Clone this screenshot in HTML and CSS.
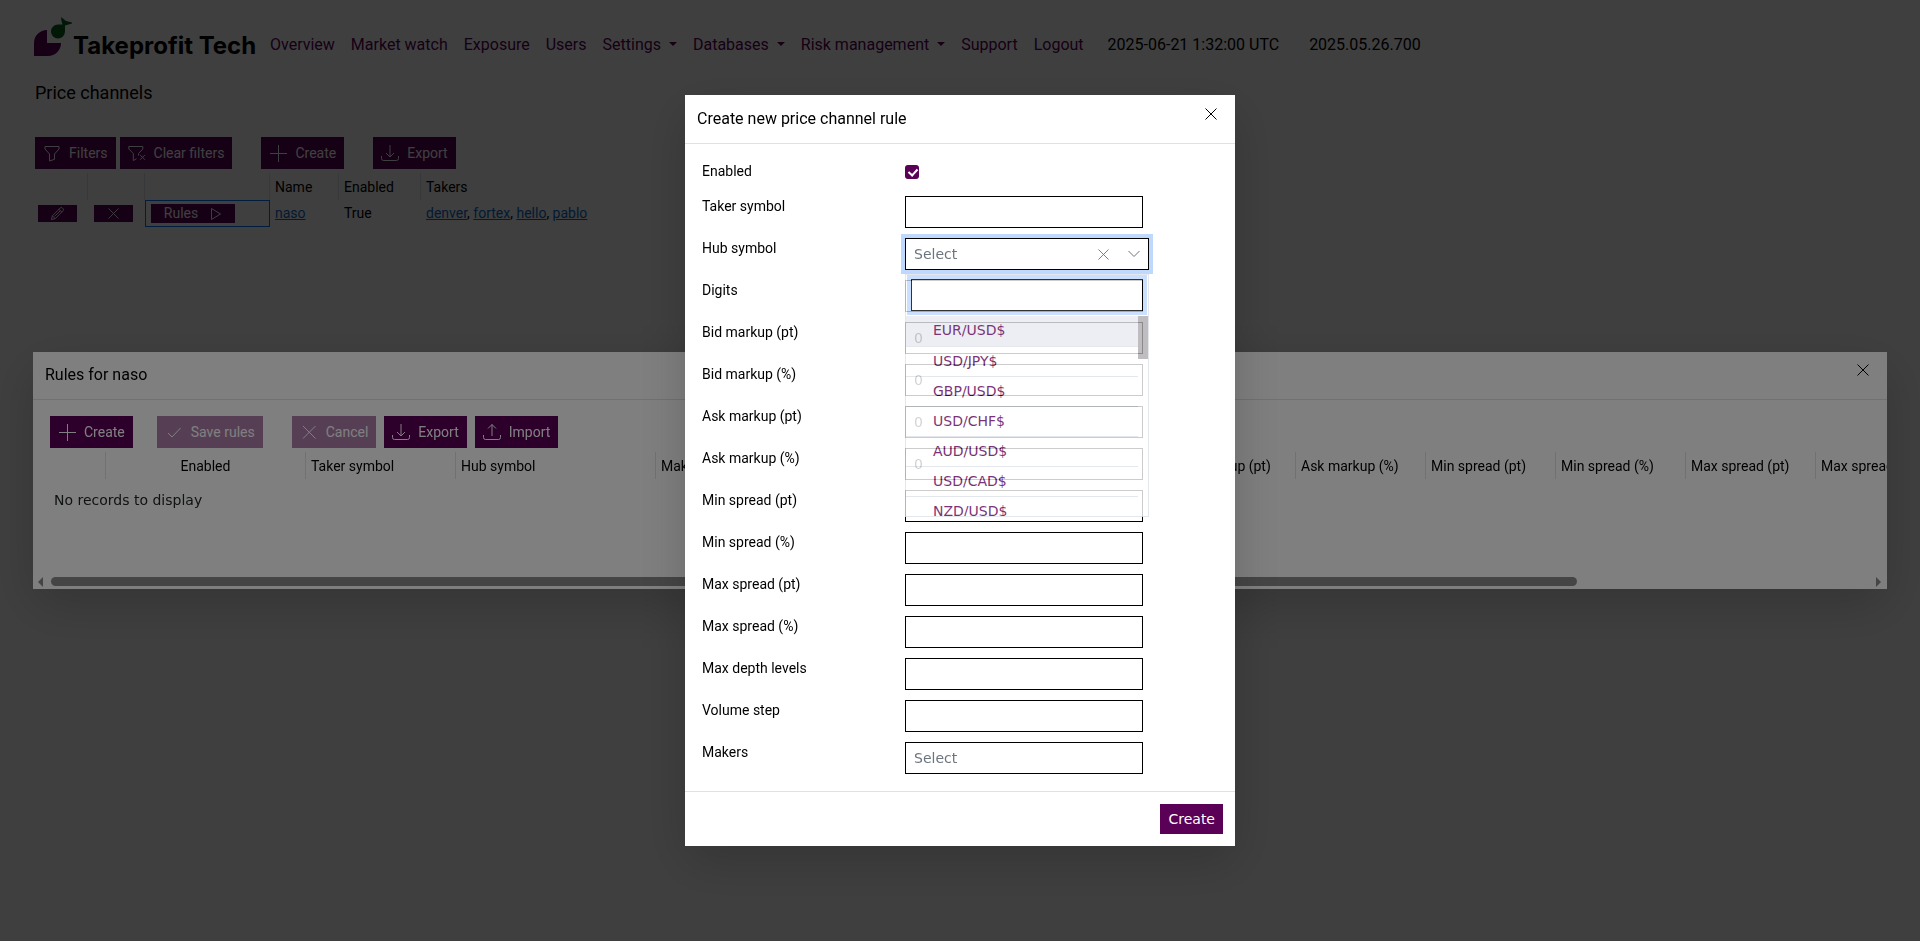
FILE: index.html
```html
<!DOCTYPE html>
<html lang="en">
<head>
<meta charset="utf-8">
<meta name="viewport" content="width=device-width, initial-scale=1">
<title>Price channels</title>
<link rel="stylesheet" href="styles.css">
</head>
<body>
<svg class="sprite" aria-hidden="true">
  <symbol id="i-filter" viewBox="0 0 18 18"><path d="M2 2.500h14v2.500l-4.500 5v5.300l-5 1.700v-7L2 5z" stroke-linejoin="round"/></symbol>
  <symbol id="i-filter-x" viewBox="0 0 18 18"><path d="M8.500 14.800l-3.200 1.700v-7L.8 5V2.500h14v2.500l-4.300 4.500v2M12 10.800l5 5M17 10.800l-5 5" stroke-linejoin="round"/></symbol>
  <symbol id="i-plus" viewBox="0 0 18 18"><path d="M9.500 1v17M1 9.500h17"/></symbol>
  <symbol id="i-down" viewBox="0 0 18 18"><path d="M.5 12v2.500q0 2 2 2h13q2 0 2-2V12M9 1v12M5 9l4 4 4-4"/></symbol>
  <symbol id="i-up" viewBox="0 0 18 18"><path d="M.5 12v2.500q0 2 2 2h13q2 0 2-2V12M9 13V1.500M5 5.500l4-4 4 4"/></symbol>
  <symbol id="i-check" viewBox="0 0 18 18"><path d="M3 10l4 4 8.500-9"/></symbol>
  <symbol id="i-x" viewBox="0 0 18 18"><path d="M3 3l12.500 12.500M15.500 3L3 15.500"/></symbol>
  <symbol id="i-close" viewBox="0 0 12 12"><path d="M.5.5l11 11M11.500.5l-11 11"/></symbol>
  <symbol id="i-pencil" viewBox="0 0 16 16"><path d="M1.500 14.500l1-4L11 2q1-1 2 0l1 1q1 1 0 2l-8.500 8.500zM9.500 3.500l3 3M2.500 10.500l3 3M5 11l6-6" stroke-linejoin="round"/></symbol>
  <symbol id="i-play" viewBox="0 0 12 14"><path d="M1.500 1.500v11l9-5.500z" stroke-linejoin="round"/></symbol>
  <symbol id="i-chevron" viewBox="0 0 12 8"><path d="M.5 1l5.500 5.500L11.500 1"/></symbol>
</svg>

<div class="page">
  <header class="topbar">
    <a class="brand" href="#">
      <svg class="brand-mark" viewBox="0 0 38 40" aria-hidden="true">
        <path class="leaf" d="M0 39V26A13 13 0 0 1 13 13v13h14A13 13 0 0 1 14 39z"/>
        <path class="fruit" d="M17 14.500A7 7 0 0 1 24 7.500h4.500L27.500 4 27 0l5 4 6 1.500v1L31 8.500V14.500a7 7 0 0 1-14 0z"/>
      </svg>
      <span class="brand-name">Takeprofit Tech</span>
    </a>
    <nav class="nav">
      <a href="#">Overview</a>
      <a href="#">Market watch</a>
      <a href="#">Exposure</a>
      <a href="#">Users</a>
      <a class="drop" href="#">Settings</a>
      <a class="drop" href="#">Databases</a>
      <a class="drop" href="#">Risk management</a>
      <a href="#">Support</a>
      <a href="#">Logout</a>
    </nav>
    <span class="clock">2025-06-21 1:32:00 UTC</span>
    <span>2025.05.26.700</span>
  </header>
  <main class="content">
    <h1 class="title">Price channels</h1>
    <div class="toolbar">
      <button class="btn" type="button"><svg><use href="#i-filter"/></svg>Filters</button>
      <button class="btn gap-s" type="button"><svg><use href="#i-filter-x"/></svg>Clear filters</button>
      <button class="btn gap-l" type="button"><svg><use href="#i-plus"/></svg>Create</button>
      <button class="btn gap-l" type="button"><svg><use href="#i-down"/></svg>Export</button>
    </div>
    <table class="grid channels">
      <colgroup><col class="c-edit"><col class="c-del"><col class="c-rules"><col class="c-name"><col class="c-on"><col class="c-takers"></colgroup>
      <thead><tr><th></th><th></th><th></th><th>Name</th><th>Enabled</th><th>Takers</th></tr></thead>
      <tbody><tr>
        <td class="act"><button class="mini" type="button" aria-label="Edit"><svg class="pencil"><use href="#i-pencil"/></svg></button></td>
        <td class="act"><button class="mini" type="button" aria-label="Delete"><svg class="cross"><use href="#i-close"/></svg></button></td>
        <td class="act focused"><button class="mini rules" type="button">Rules<svg class="play"><use href="#i-play"/></svg></button></td>
        <td><a href="#">naso</a></td>
        <td>True</td>
        <td><a href="#">denver</a>, <a href="#">fortex</a>, <a href="#">hello</a>, <a href="#">pablo</a></td>
      </tr></tbody>
    </table>
  </main>
</div>

<div class="overlay">
  <section class="dialog rules-dialog" role="dialog" aria-label="Rules for naso">
    <header class="dialog-head"><h2>Rules for naso</h2><button class="close" type="button" aria-label="Close"><svg><use href="#i-close"/></svg></button></header>
    <div class="rules-body">
      <div class="toolbar">
        <button class="btn" type="button"><svg><use href="#i-plus"/></svg>Create</button>
        <button class="btn gap-m" type="button" disabled><svg><use href="#i-check"/></svg>Save rules</button>
        <button class="btn gap-l" type="button" disabled><svg><use href="#i-x"/></svg>Cancel</button>
        <button class="btn gap-n" type="button"><svg><use href="#i-down"/></svg>Export</button>
        <button class="btn gap-n" type="button"><svg><use href="#i-up"/></svg>Import</button>
      </div>
      <table class="grid rules-grid">
        <colgroup><col class="r-icon"><col class="r-wide"><col class="r-taker"><col class="r-wide"><col class="r-makers"><col class="r-num" span="9"></colgroup>
        <thead><tr><th></th><th class="mid">Enabled</th><th>Taker symbol</th><th>Hub symbol</th><th>Makers</th><th>Digits</th><th>Bid markup (pt)</th><th>Bid markup (%)</th><th>Ask markup (pt)</th><th>Ask markup (%)</th><th>Min spread (pt)</th><th>Min spread (%)</th><th>Max spread (pt)</th><th>Max spread (%)</th></tr></thead>
        <tbody><tr><td class="empty" colspan="14">No records to display</td></tr></tbody>
      </table>
    </div>
    <div class="scroll" aria-hidden="true"><span class="arrow-l"></span><span class="track"><span class="thumb"></span></span><span class="arrow-r"></span></div>
  </section>
</div>

<div class="overlay">
  <form class="dialog create-dialog" role="dialog" aria-label="Create new price channel rule">
    <header class="dialog-head"><h2>Create new price channel rule</h2><button class="close" type="button" aria-label="Close"><svg><use href="#i-close"/></svg></button></header>
    <div class="fields">
      <div class="field check"><label for="f-enabled">Enabled</label><input id="f-enabled" type="checkbox" checked></div>
      <div class="field"><label for="f-taker">Taker symbol</label><input class="box" id="f-taker" type="text"></div>
      <div class="field"><label for="f-hub">Hub symbol</label>
        <div class="combo">
          <button class="combo-box" id="f-hub" type="button" aria-haspopup="listbox" aria-expanded="true"><span>Select</span><svg class="clear"><use href="#i-close"/></svg><svg class="chev"><use href="#i-chevron"/></svg></button>
          <div class="popup">
            <div class="search"><input class="box" type="text" aria-label="Search symbols"></div>
            <div class="list">
              <ul role="listbox" aria-label="Hub symbol">
                <li class="active" role="option">EUR/USD$</li><li role="option">USD/JPY$</li><li role="option">GBP/USD$</li><li role="option">USD/CHF$</li><li role="option">AUD/USD$</li><li role="option">USD/CAD$</li><li role="option">NZD/USD$</li>
              </ul>
              <span class="list-thumb"></span>
            </div>
          </div>
        </div>
      </div>
      <div class="field"><label for="f-digits">Digits</label><input class="box" id="f-digits" type="text"></div>
      <div class="field"><label for="f-bp">Bid markup (pt)</label><input class="box" id="f-bp" type="text" placeholder="0"></div>
      <div class="field"><label for="f-bc">Bid markup (%)</label><input class="box" id="f-bc" type="text" placeholder="0"></div>
      <div class="field"><label for="f-ap">Ask markup (pt)</label><input class="box" id="f-ap" type="text" placeholder="0"></div>
      <div class="field"><label for="f-ac">Ask markup (%)</label><input class="box" id="f-ac" type="text" placeholder="0"></div>
      <div class="field"><label for="f-np">Min spread (pt)</label><input class="box" id="f-np" type="text"></div>
      <div class="field"><label for="f-nc">Min spread (%)</label><input class="box" id="f-nc" type="text"></div>
      <div class="field"><label for="f-xp">Max spread (pt)</label><input class="box" id="f-xp" type="text"></div>
      <div class="field"><label for="f-xc">Max spread (%)</label><input class="box" id="f-xc" type="text"></div>
      <div class="field"><label for="f-depth">Max depth levels</label><input class="box" id="f-depth" type="text"></div>
      <div class="field"><label for="f-step">Volume step</label><input class="box" id="f-step" type="text"></div>
      <div class="field"><label for="f-makers">Makers</label><select class="box" id="f-makers"><option>Select</option></select></div>
    </div>
    <footer class="dialog-foot"><button class="submit" type="submit">Create</button></footer>
  </form>
</div>
</body>
</html>
```

FILE: styles.css
```css
:root {
  --purple: #5a0056;
  --line: #dee2e6;
  --ui: Roboto, sans-serif;
  --system: "DejaVu Sans", sans-serif;
}

* { box-sizing: border-box; }

body {
  margin: 0;
  background: #fff;
  color: #000;
  font: 14px/21px var(--ui);
}

h1, h2, ul { margin: 0; padding: 0; font-weight: 400; }
button, input, select { font: inherit; margin: 0; border-radius: 0; }
svg { fill: none; stroke: currentColor; flex: none; }
.sprite { display: none; }

/* top navigation */
.page { padding: 17px 32px; }
.topbar {
  display: flex;
  align-items: center;
  height: 56px;
  font-size: 16px;
  line-height: 24px;
  white-space: nowrap;
}
.brand {
  display: flex;
  align-items: flex-end;
  gap: 1px;
  width: 230px;
  padding-left: 2px;
  color: #000;
  text-decoration: none;
}
.brand-mark { width: 38px; height: 40px; margin-bottom: 17px; stroke: none; }
.leaf { fill: #5c0059; }
.fruit { fill: #05601b; }
.brand-name { font: 700 24px/32px Inter, sans-serif; margin-bottom: 12px; }
.nav { display: flex; }
.nav a { padding: 0 8px; color: var(--purple); text-decoration: none; }
.nav .drop::after {
  content: "";
  display: inline-block;
  margin-left: 8px;
  vertical-align: 4px;
  border: 4px solid transparent;
  border-top-color: currentColor;
  border-bottom: 0;
}
.clock { margin: 0 30px 0 16px; }

/* page content */
.content { padding: 6px 3px; }
.title { font-size: 18px; line-height: 27px; margin-bottom: 31px; }
.toolbar { display: flex; }
.btn {
  display: flex;
  align-items: center;
  gap: 8px;
  height: 32px;
  padding: 0 8px;
  border: 0;
  background: var(--purple);
  color: #fff;
}
.btn svg { width: 18px; height: 18px; }
.btn:disabled { opacity: .5; }
.gap-s { margin-left: 4px; }
.gap-n { margin-left: 8px; }
.gap-m { margin-left: 24px; }
.gap-l { margin-left: 29px; }

.grid { border-collapse: separate; border-spacing: 0; table-layout: fixed; margin-top: 4px; }
.grid th {
  height: 27px;
  padding: 1px 5px 0;
  border-right: 1px solid var(--line);
  font-weight: 400;
  text-align: left;
  white-space: nowrap;
}
.grid th:last-child { border-right: 0; }
.grid td { height: 27px; padding: 0 5px; }
.grid a { color: #0a6ac9; }
.channels { width: 700px; }
.c-edit { width: 53px; }
.c-del { width: 57px; }
.c-rules { width: 125px; }
.c-name { width: 69px; }
.c-on { width: 82px; }
.grid .act { padding: 0 3px 0 6px; }
.grid .act:first-child { padding-left: 3px; }
.mini {
  display: flex;
  align-items: center;
  justify-content: center;
  width: 39px;
  height: 17px;
  padding: 0;
  border: 0;
  background: var(--purple);
  color: #fff;
}
.mini.rules { width: 84px; height: 19px; gap: 12px; }
.focused { outline: 1px solid #0070ff; outline-offset: -1px; }
.pencil { width: 15px; height: 15px; }
.cross { width: 11px; height: 11px; }
.play { width: 12px; height: 14px; }

/* dialogs */
.overlay {
  position: fixed;
  inset: 0;
  display: grid;
  place-items: center;
  background: rgba(0, 0, 0, .5);
}
.dialog { background: #fff; box-shadow: 0 16px 48px rgba(0, 0, 0, .18); }
.dialog-head {
  display: flex;
  justify-content: space-between;
  padding: 12px 18px 12px 12px;
  border-bottom: 1px solid var(--line);
}
.dialog-head h2 { font-size: 16px; line-height: 24px; }
.close { width: 12px; height: 12px; margin-top: 1px; padding: 0; border: 0; background: none; color: #000; }
.close svg { display: block; width: 12px; height: 12px; }

.rules-dialog { width: calc(100% - 66px); }
.rules-dialog .dialog-head { padding-top: 11px; }
.rules-body { padding: 16px 0 0 17px; height: 177px; overflow: hidden; }
.rules-grid { width: 1896px; }
.r-icon { width: 56px; }
.r-wide { width: 200px; }
.r-taker { width: 150px; }
.r-makers { width: 120px; }
.r-num { width: 130px; }
.grid .mid { text-align: center; }
.grid .empty { height: 42px; padding-left: 4px; font-family: var(--system); color: #212529; }
.scroll { display: flex; align-items: center; gap: 8px; height: 12px; padding: 0 6px 3px 5px; }
.track { flex: 1; }
.thumb { display: block; width: 84%; height: 9px; border-radius: 5px; background: #8b8b8b; }
.arrow-l, .arrow-r { border: 5px solid transparent; }
.arrow-l { border-right-color: #8b8b8b; border-left: 0; }
.arrow-r { border-left-color: #8b8b8b; border-right: 0; }

.create-dialog { width: 550px; }
.fields { display: grid; gap: 10px; padding: 17px; }
.field { display: grid; grid-template-columns: 203px 1fr; align-items: start; }
.check input {
  appearance: none;
  width: 14px;
  height: 14px;
  margin: 4px 0 7px;
  border-radius: 3px;
  background: var(--purple);
}
.check input::after {
  content: "";
  display: block;
  width: 4px;
  height: 7px;
  margin: 2px 5px;
  border: solid #fff;
  border-width: 0 2px 2px 0;
  transform: rotate(42deg);
}
.box {
  width: 238px;
  height: 32px;
  padding: 0 8px;
  border: 1px solid #000;
  background: #fff;
  font: 14px/20px var(--system);
  color: #6c757d;
  appearance: none;
}
.box::placeholder { color: #212529; opacity: 1; }
.combo { position: relative; width: 244px; }
.combo-box {
  display: flex;
  align-items: center;
  width: 100%;
  height: 32px;
  padding: 0 8px;
  border: 1px solid #000;
  background: #fff;
  box-shadow: 0 0 0 4px #bfd9fe;
  font: 14px/20px var(--system);
  color: #6c757d;
}
.combo-box span { flex: 1; text-align: left; }
.clear { width: 11px; height: 11px; margin-right: 19px; }
.chev { width: 12px; height: 8px; }
.popup {
  position: absolute;
  z-index: 2;
  top: 36px;
  left: 0;
  width: 100%;
  height: 243px;
  overflow: hidden;
  border: 1px solid var(--line);
  background: #fff;
  opacity: .8;
}
.search { padding: 4px 5px; }
.search .box { display: block; width: 100%; box-shadow: 0 0 0 4px #bfd9fe; }
.list { display: flex; align-items: flex-start; padding-top: 1px; }
.list ul { flex: 1; list-style: none; font: 14px/20px var(--system); color: var(--purple); }
.list li { height: 30px; padding: 4px 0 0 27px; border-bottom: 1px solid var(--line); }
.list .active { height: 31px; background: #e9eaf0; }
.list-thumb { width: 10px; height: 43px; background: #b0adaf; }

.dialog-foot {
  display: flex;
  justify-content: flex-end;
  padding: 12px;
  border-top: 1px solid var(--line);
}
.submit {
  height: 30px;
  padding: 0 8px;
  border: 0;
  background: var(--purple);
  color: #fff;
  font: 14px/20px var(--system);
}
```
